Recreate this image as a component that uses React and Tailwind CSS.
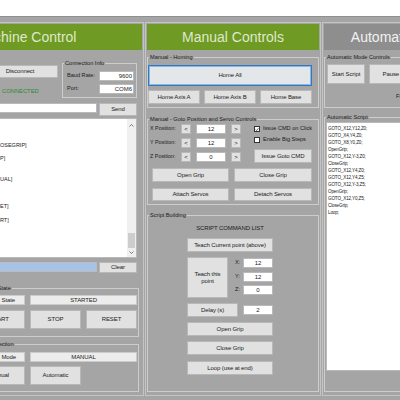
import React from "react";

const FONT = "[font-family:'Liberation_Sans',Arial,sans-serif]";

function Btn({ className = "", focused = false, children }) {
  return (
    <button
      type="button"
      className={`flex shrink-0 items-center justify-center whitespace-nowrap border text-[6px] leading-[7px] tracking-[-0.1px] text-[#1b1b1b] ${
        focused
          ? "border-[#2f78c4] bg-[#e4e7ea] shadow-[inset_0_0_0_1px_#8db5de]"
          : "border-[#b8b8b8] bg-[#e1e1e1]"
      } ${className}`}
    >
      {children}
    </button>
  );
}

function Input({ value, className = "", align = "justify-center" }) {
  return (
    <div
      className={`flex shrink-0 items-center whitespace-nowrap border border-[#b9b9b9] bg-white px-[1px] text-[6px] leading-none text-[#1b1b1b] ${align} ${className}`}
    >
      {value}
    </div>
  );
}

function Readout({ value, className = "" }) {
  return (
    <div
      className={`flex shrink-0 items-center whitespace-nowrap border border-[#cbcbcb] bg-[#ececec] text-[6px] leading-none tracking-[-0.1px] text-[#1b1b1b] ${className}`}
    >
      {value}
    </div>
  );
}

function Group({ title, className = "", children }) {
  return (
    <fieldset className={`min-w-0 shrink-0 border border-[#cdcdcd] ${className}`}>
      <legend className="ml-[1px] whitespace-nowrap px-[1px] text-[5.6px] leading-[7px] text-[#1b1b1b]">
        {title}
      </legend>
      {children}
    </fieldset>
  );
}

function Chevron({ up }) {
  return (
    <svg width="5" height="3" viewBox="0 0 5 3">
      <polyline
        points={up ? "0.5,2.5 2.5,0.5 4.5,2.5" : "0.5,0.5 2.5,2.5 4.5,0.5"}
        fill="none"
        stroke="#606060"
        strokeWidth="0.8"
      />
    </svg>
  );
}

function CheckBox({ checked, label }) {
  return (
    <div className="flex h-[10px] items-center">
      <div className="flex h-[6px] w-[6px] items-center justify-center border border-[#333] bg-white">
        {checked && (
          <svg width="5" height="5" viewBox="0 0 5 5">
            <polyline points="0.8,2.6 2,3.8 4.3,1" fill="none" stroke="#222" strokeWidth="0.9" />
          </svg>
        )}
      </div>
      <span className="ml-[3px] whitespace-nowrap text-[5.6px] leading-none">{label}</span>
    </div>
  );
}

function MachineColumn() {
  return (
    <div className="-ml-[93px] h-[374px] w-[237px] shrink-0 border border-[#c4c4c4] p-[1px]">
      <div className="flex h-[26px] items-center justify-center whitespace-nowrap bg-[#6f9a23] text-[14px] text-[#dfe9cc]">
        Machine Control
      </div>

      <div className="mt-[10px] flex items-start">
        <div className="ml-[73px] flex w-[76px] flex-col">
          <Btn className="mt-[5px] h-[13px] w-full">Disconnect</Btn>
          <div className="mt-[10px] h-[7px] whitespace-nowrap pl-[20px] text-[5.8px] leading-[7px] text-[#2c8a36]">
            CONNECTED
          </div>
        </div>
        <Group title="Connection Info" className="ml-[4px] h-[38px] w-[75px]">
          <div className="mt-[4px] flex h-[10px] items-center">
            <span className="w-[36px] pl-[4px] text-[5.6px] leading-none">Baud Rate:</span>
            <Input value="9600" align="justify-end" className="h-[10px] w-[35px]" />
          </div>
          <div className="mt-[3px] flex h-[10px] items-center">
            <span className="w-[36px] pl-[4px] text-[5.6px] leading-none">Port:</span>
            <Input value="COM6" align="justify-end" className="h-[10px] w-[35px]" />
          </div>
        </Group>
      </div>

      <div className="mt-[5px] flex items-start">
        <Input value="" className="ml-[2px] h-[10px] w-[186px]" />
        <Btn className="ml-[2px] h-[13px] w-[38px]">Send</Btn>
      </div>

      <div className="ml-[2px] mt-[2px] flex h-[140px] w-[226px] border border-[#b9b9b9] bg-white">
        <div className="flex-1 overflow-hidden whitespace-nowrap pl-[88px] pt-[20px] text-[5.5px] leading-[13px] text-[#1b1b1b]">
          <div className="h-[13px]">OSEGRIP]</div>
          <div className="h-[13px]">P]</div>
          <div className="mt-[8px] h-[13px]">UAL]</div>
          <div className="mt-[14px] h-[13px]">ET]</div>
          <div className="mt-[1px] h-[13px]">RT]</div>
        </div>
        <div className="flex w-[9px] flex-col items-center bg-[#f0f0f0]">
          <div className="mt-[5px]">
            <Chevron up />
          </div>
          <div className="mt-auto h-[15px] w-[7px] bg-[#cdcdcd]" />
          <div className="flex h-[9px] items-center">
            <Chevron />
          </div>
        </div>
      </div>

      <div className="mt-[4px] flex items-start">
        <div className="ml-[2px] h-[10px] w-[186px] border border-[#bcbcbc] bg-[#a7c4e6]" />
        <Btn className="ml-[2px] h-[11px] w-[38px]">Clear</Btn>
      </div>

      <Group title="Machine State" className="ml-[63px] mt-[12px] h-[52px] w-[167px]">
        <div className="mt-[3px] flex items-start">
          <Readout value="State" className="ml-[1px] h-[10px] w-[51px] justify-end pr-[9px]" />
          <Readout value="STARTED" className="ml-[5px] h-[10px] w-[107px] justify-center" />
        </div>
        <div className="mt-[5px] flex">
          <Btn className="ml-[1px] h-[19px] w-[51px]">START</Btn>
          <Btn className="ml-[5px] h-[19px] w-[51px]">STOP</Btn>
          <Btn className="ml-[5px] h-[19px] w-[51px]">RESET</Btn>
        </div>
      </Group>

      <Group title="Mode Selection" className="ml-[63px] mt-[4px] h-[51px] w-[167px]">
        <div className="mt-[4px] flex items-start">
          <Readout value="Mode" className="ml-[1px] h-[10px] w-[51px] justify-end pr-[8px]" />
          <Readout value="MANUAL" className="ml-[5px] h-[10px] w-[107px] justify-center" />
        </div>
        <div className="mt-[4px] flex">
          <Btn className="ml-[1px] h-[19px] w-[51px]">Manual</Btn>
          <Btn className="ml-[5px] h-[19px] w-[51px]">Automatic</Btn>
        </div>
      </Group>
    </div>
  );
}

function AxisRow({ label, value }) {
  return (
    <div className="flex h-[10px] items-center">
      <span className="w-[31px] whitespace-nowrap text-[5.4px] leading-none">{label}</span>
      <Btn className="h-[10px] w-[10px]">&lt;</Btn>
      <Input value={value} className="ml-[5px] h-[10px] w-[30px]" />
      <Btn className="ml-[5px] h-[10px] w-[10px]">&gt;</Btn>
    </div>
  );
}

function PointRow({ label, value }) {
  return (
    <div className="flex h-[10px] items-center">
      <span className="w-[8px] text-[5.6px] leading-none">{label}</span>
      <Input value={value} className="h-[10px] w-[30px]" />
    </div>
  );
}

function ManualColumn() {
  return (
    <div className="h-[374px] w-[176px] shrink-0 border border-[#c4c4c4] p-[1px]">
      <div className="flex h-[26px] items-center justify-center whitespace-nowrap bg-[#6f9a23] text-[14px] text-[#dfe9cc]">
        Manual Controls
      </div>

      <Group title="Manual - Homing" className="mt-[4px] h-[54px] w-full">
        <Btn focused className="mt-[4px] h-[21px] w-[164px]">
          Home All
        </Btn>
        <div className="mt-[4px] flex gap-[4px]">
          <Btn className="h-[14px] w-[52px]">Home Axis A</Btn>
          <Btn className="h-[14px] w-[52px]">Home Axis B</Btn>
          <Btn className="h-[14px] w-[52px]">Home Base</Btn>
        </div>
      </Group>

      <Group title="Manual - Goto Position and Servo Controls" className="mt-[8px] h-[89px] w-full">
        <div className="mt-[1px] flex items-start">
          <div className="ml-[2px] flex flex-col gap-[4px]">
            <AxisRow label="X Position:" value="12" />
            <AxisRow label="Y Position:" value="12" />
            <AxisRow label="Z Position:" value="0" />
          </div>
          <div className="ml-[13px] flex w-[58px] flex-col">
            <CheckBox checked label="Issue CMD on Click" />
            <div className="mt-[1px]">
              <CheckBox label="Enable Big Steps" />
            </div>
            <Btn className="mt-[4px] h-[14px] w-[58px]">Issue Goto CMD</Btn>
          </div>
        </div>
        <div className="mt-[5px] flex">
          <Btn className="ml-[4px] h-[14px] w-[77px]">Open Grip</Btn>
          <Btn className="ml-[5px] h-[14px] w-[78px]">Close Grip</Btn>
        </div>
        <div className="mt-[6px] flex">
          <Btn className="ml-[4px] h-[13px] w-[77px]">Attach Servos</Btn>
          <Btn className="ml-[5px] h-[13px] w-[78px]">Detach Servos</Btn>
        </div>
      </Group>

      <Group title="Script Building" className="mt-[7px] h-[180px] w-full">
        <div className="ml-[39px] mt-[5px] flex w-[86px] flex-col">
          <div className="h-[8px] whitespace-nowrap text-center text-[6px] leading-[8px] tracking-[-0.1px]">
            SCRIPT COMMAND LIST
          </div>
          <Btn className="mt-[6px] h-[14px] w-full">Teach Current point (above)</Btn>
          <div className="mt-[5px] flex h-[41px]">
            <Btn className="h-[41px] w-[41px] flex-col whitespace-normal text-center">
              <span>Teach this</span>
              <span>point</span>
            </Btn>
            <div className="ml-[7px] flex flex-col gap-[3.5px] pt-[1px]">
              <PointRow label="X:" value="12" />
              <PointRow label="Y:" value="12" />
              <PointRow label="Z:" value="0" />
            </div>
          </div>
          <div className="mt-[5px] flex h-[14px] items-center">
            <Btn className="h-[14px] w-[51px]">Delay (s)</Btn>
            <Input value="2" className="ml-[5px] h-[10px] w-[30px]" />
          </div>
          <Btn className="mt-[5px] h-[14px] w-full">Open Grip</Btn>
          <Btn className="mt-[5px] h-[14px] w-full">Close Grip</Btn>
          <Btn className="mt-[6px] h-[14px] w-full">Loop (use at end)</Btn>
        </div>
      </Group>
    </div>
  );
}

const scriptLines = [
  "GOTO_X12,Y12,Z0;",
  "GOTO_X4,Y4,Z0;",
  "GOTO_X8,Y0,Z0;",
  "OpenGrip;",
  "GOTO_X12,Y-3,Z0;",
  "CloseGrip;",
  "GOTO_X12,Y4,Z0;",
  "GOTO_X12,Y4,Z5;",
  "GOTO_X12,Y-3,Z5;",
  "OpenGrip;",
  "GOTO_X12,Y0,Z5;",
  "CloseGrip;",
  "Loop;",
];

function AutoColumn() {
  return (
    <div className="h-[374px] w-[176px] shrink-0 border border-[#c4c4c4] p-[1px]">
      <div className="flex h-[26px] items-center justify-center whitespace-nowrap bg-[#8e8e8e] text-[14px] text-[#f2f2f2]">
        Automatic Controls
      </div>

      <Group title="Automatic Mode Controls" className="mt-[4px] h-[54px] w-full">
        <div className="mt-[3px] flex">
          <Btn className="ml-[2px] h-[20px] w-[38px]">Start Script</Btn>
          <Btn className="ml-[4px] h-[20px] w-[60px]">Pause Script</Btn>
        </div>
        <div className="mt-[9px] h-[7px] whitespace-nowrap pl-[71px] text-[5.6px] leading-[7px]">
          Finished
        </div>
      </Group>

      <Group title="Automatic Script" className="mt-[6px] h-[278px] w-full">
        <div className="ml-[1px] mt-[1px] h-[249px] w-[166px] border border-[#b9b9b9] bg-white pl-[1px] pt-[1.5px]">
          {scriptLines.map((line, i) => (
            <div
              key={i}
              className="h-[7px] whitespace-nowrap text-[4.6px] leading-[7px] tracking-[-0.15px] text-[#1b1b1b]"
            >
              {line}
            </div>
          ))}
        </div>
      </Group>
    </div>
  );
}

export default function App() {
  return (
    <div className={`h-[400px] w-[400px] overflow-hidden bg-[#a5a5a5] text-[#1b1b1b] ${FONT}`}>
      <div className="h-[17px] border-b border-[#8f8f8f] bg-white" />
      <div className="mt-[5px] flex items-start gap-[1px]">
        <MachineColumn />
        <ManualColumn />
        <AutoColumn />
      </div>
    </div>
  );
}
